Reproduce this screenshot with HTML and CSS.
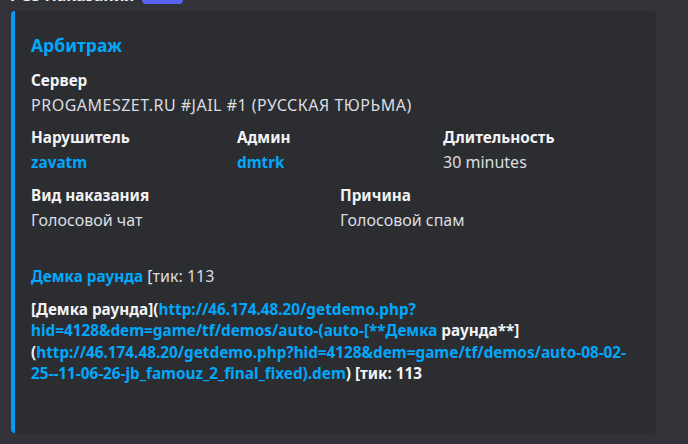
FILE: index.html
```html
<!DOCTYPE html>
<html lang="ru">
<head>
    <meta charset="UTF-8">
    <title>Наказания</title>
    <link rel="stylesheet" href="styles.css">
</head>
<body>
    <div class="header">
        <span class="author">PGS Наказания</span>
        <span class="badge">APP</span>
        <span class="time">03.02.2025 10:07</span>
    </div>

    <div class="embed">
        <div class="title">Арбитраж</div>

        <div class="fields">
            <div class="field full">
                <div class="name">Сервер</div>
                <div class="value caps">PROGAMESZET.RU #JAIL #1 (РУССКАЯ ТЮРЬМА)</div>
            </div>
            <div class="row three">
                <div class="field">
                    <div class="name">Нарушитель</div>
                    <div class="value"><a class="link">zavatm</a></div>
                </div>
                <div class="field">
                    <div class="name">Админ</div>
                    <div class="value"><a class="link">dmtrk</a></div>
                </div>
                <div class="field">
                    <div class="name">Длительность</div>
                    <div class="value">30 minutes</div>
                </div>
            </div>
            <div class="row two">
                <div class="field">
                    <div class="name">Вид наказания</div>
                    <div class="value">Голосовой чат</div>
                </div>
                <div class="field">
                    <div class="name">Причина</div>
                    <div class="value">Голосовой спам</div>
                </div>
            </div>
        </div>

        <div class="demo"><a class="link">Демка раунда</a> [тик: 113</div>

        <div class="desc">
            [Демка раунда](<a class="link">http://46.174.48.20/getdemo.php?<br>hid=4128&amp;dem=game/tf/demos/auto-(auto-[**Демка</a> раунда**]<br>(<a class="link">http://46.174.48.20/getdemo.php?hid=4128&amp;dem=game/tf/demos/auto-08-02-<br>25--11-06-26-jb_famouz_2_final_fixed).dem</a>) [тик: 113
        </div>
    </div>
</body>
</html>
```

FILE: styles.css
```css
body {
    margin: 0;
    background-color: #313338;
    font-family: "Noto Sans", "Open Sans", sans-serif;
    color: #dbdee1;
    font-size: 16px;
    overflow: hidden;
}
.header {
    display: flex;
    align-items: center;
    height: 20px;
    margin-top: -15px;
    padding-left: 10px;
    margin-bottom: 6px;
}
.author {
    color: #f2f3f5;
    font-weight: 700;
    font-size: 16px;
}
.badge {
    margin-left: 8px;
    width: 41px;
    height: 18px;
    border-radius: 4px;
    background-color: #5865f2;
    color: #fff;
    font-size: 11px;
    font-weight: 700;
    text-align: center;
    line-height: 18px;
}
.time {
    margin-left: 11px;
    color: #949ba4;
    font-size: 12px;
}
.embed {
    margin-left: 11px;
    width: 645px;
    height: 422px;
    box-sizing: border-box;
    border-left: 4px solid #0a9af5;
    border-radius: 4px;
    background-color: #2b2d31;
    padding: 23px 10px 0 16px;
}
.title {
    color: #00a8fc;
    font-size: 17.5px;
    font-weight: 700;
    line-height: 22px;
}
.fields {
    margin-top: 14px;
}
.name {
    color: #f2f3f5;
    font-size: 15.3px;
    font-weight: 700;
    line-height: 20px;
}
.value {
    margin-top: 5px;
    line-height: 20px;
}
.caps {
    letter-spacing: 0.5px;
}
.row {
    display: grid;
    margin-top: 12px;
}
.three {
    grid-template-columns: 206px 206px 206px;
}
.two {
    grid-template-columns: 309px 309px;
    margin-top: 13px;
}
.link {
    color: #00a8fc;
    font-size: 15.3px;
    font-weight: 700;
    text-decoration: none;
}
.demo {
    margin-top: 36px;
    line-height: 20px;
}
.desc {
    margin-top: 13px;
    color: #f2f3f5;
    font-size: 15.3px;
    font-weight: 700;
    line-height: 21.3px;
    white-space: nowrap;
}
.desc .link {
    font-size: 15.3px;
}
```
